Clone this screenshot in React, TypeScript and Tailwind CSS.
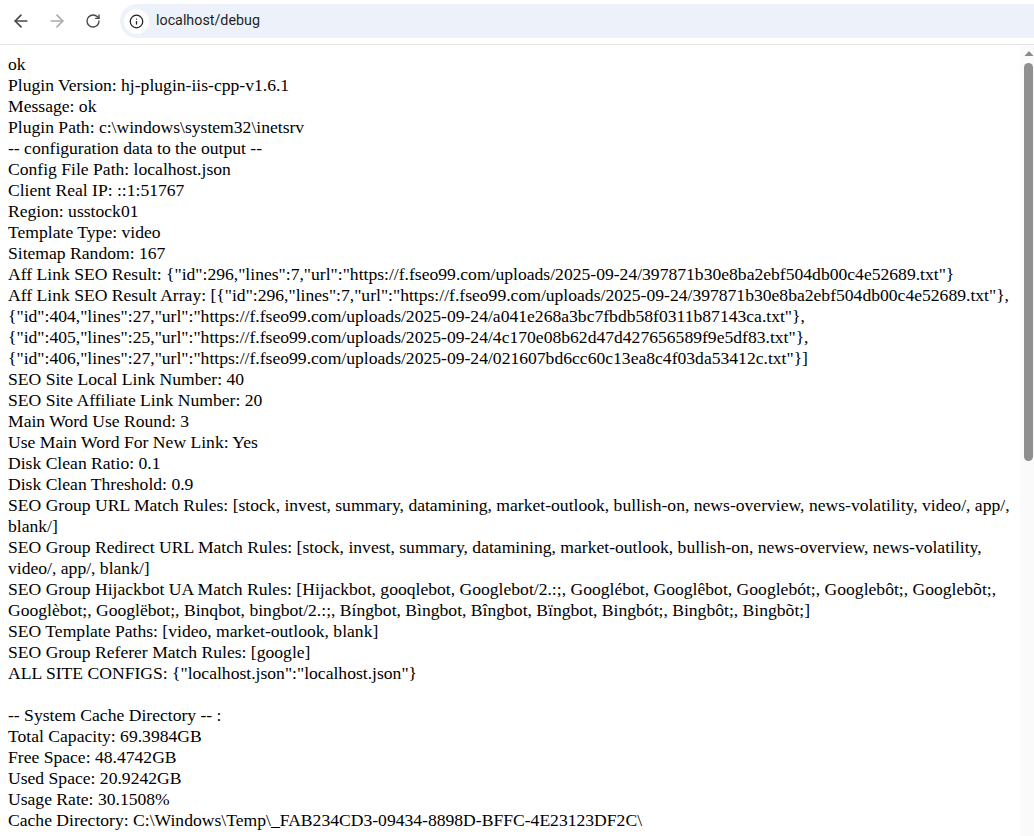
import { ArrowLeft, ArrowRight, RotateCw, Info } from 'lucide-react';

const lines = [
  'ok',
  'Plugin Version: hj-plugin-iis-cpp-v1.6.1',
  'Message: ok',
  'Plugin Path: c:\\windows\\system32\\inetsrv',
  '-- configuration data to the output --',
  'Config File Path: localhost.json',
  'Client Real IP: ::1:51767',
  'Region: usstock01',
  'Template Type: video',
  'Sitemap Random: 167',
  'Aff Link SEO Result: {"id":296,"lines":7,"url":"https://f.fseo99.com/uploads/2025-09-24/397871b30e8ba2ebf504db00c4e52689.txt"}',
  'Aff Link SEO Result Array: [{"id":296,"lines":7,"url":"https://f.fseo99.com/uploads/2025-09-24/397871b30e8ba2ebf504db00c4e52689.txt"}, {"id":404,"lines":27,"url":"https://f.fseo99.com/uploads/2025-09-24/a041e268a3bc7fbdb58f0311b87143ca.txt"}, {"id":405,"lines":25,"url":"https://f.fseo99.com/uploads/2025-09-24/4c170e08b62d47d427656589f9e5df83.txt"}, {"id":406,"lines":27,"url":"https://f.fseo99.com/uploads/2025-09-24/021607bd6cc60c13ea8c4f03da53412c.txt"}]',
  'SEO Site Local Link Number: 40',
  'SEO Site Affiliate Link Number: 20',
  'Main Word Use Round: 3',
  'Use Main Word For New Link: Yes',
  'Disk Clean Ratio: 0.1',
  'Disk Clean Threshold: 0.9',
  'SEO Group URL Match Rules: [stock, invest, summary, datamining, market-outlook, bullish-on, news-overview, news-volatility, video/, app/, blank/]',
  'SEO Group Redirect URL Match Rules: [stock, invest, summary, datamining, market-outlook, bullish-on, news-overview, news-volatility, video/, app/, blank/]',
  'SEO Group Hijackbot UA Match Rules: [Hijackbot, gooqlebot, Googlebot/2.:;, Googlébot, Googlêbot, Googlebót;, Googlebôt;, Googlebõt;, Googlèbot;, Googlëbot;, Binqbot, bingbot/2.:;, Bíngbot, Bìngbot, Bîngbot, Bïngbot, Bingbót;, Bingbôt;, Bingbõt;]',
  'SEO Template Paths: [video, market-outlook, blank]',
  'SEO Group Referer Match Rules: [google]',
  'ALL SITE CONFIGS: {"localhost.json":"localhost.json"}',
  '',
  '-- System Cache Directory -- :',
  'Total Capacity: 69.3984GB',
  'Free Space: 48.4742GB',
  'Used Space: 20.9242GB',
  'Usage Rate: 30.1508%',
  'Cache Directory: C:\\Windows\\Temp\\_FAB234CD3-09434-8898D-BFFC-4E23123DF2C\\',
];

export default function App() {
  return (
    <div className="flex h-[836px] w-[1034px] flex-col overflow-hidden bg-white">
      {/* Browser toolbar */}
      <div className="flex h-[45px] shrink-0 items-start border-b border-[#e1e3e6] bg-white pt-1">
        <div className="flex h-[34px] w-[120px] items-center pl-[11px] text-[#474747]">
          <ArrowLeft size={20} strokeWidth={2} />
          <ArrowRight size={20} strokeWidth={2} className="ml-[16px] text-[#a9abad]" />
          <RotateCw size={16} strokeWidth={2} className="ml-[18px]" />
        </div>
        <div className="flex h-[34px] flex-1 items-center rounded-l-full bg-[#edf2fa] pl-1">
          <div className="flex h-[25px] w-[25px] items-center justify-center rounded-full bg-white text-[#1f1f1f]">
            <Info size={15} strokeWidth={2} />
          </div>
          <span className="ml-[7px] font-['Roboto',sans-serif] text-[14.3px] text-[#1f1f1f]">localhost/debug</span>
        </div>
      </div>

      <div className="flex min-h-0 flex-1">
        {/* Page output */}
        <div className="min-w-0 flex-1 overflow-hidden pb-[8px] pl-[8px] pr-[8px] pt-[9px] font-['Liberation_Serif',serif] text-[17.6px] leading-[21px] text-black">
          {lines.map((line, i) => (
            <div key={i} className="min-h-[21px]">{line}</div>
          ))}
        </div>

        {/* Scrollbar */}
        <div className="flex w-[14px] shrink-0 flex-col items-center bg-[#fafafa] pl-[3px] pt-[5px]">
          <svg width="10" height="7" viewBox="0 0 10 7" className="shrink-0">
            <path d="M5 1 L9.5 6 H0.5 Z" fill="#8a8a8a" />
          </svg>
          <div className="mt-[6px] h-[398px] w-[9px] shrink-0 rounded-full bg-[#8f8f8f]" />
        </div>
      </div>
    </div>
  );
}
